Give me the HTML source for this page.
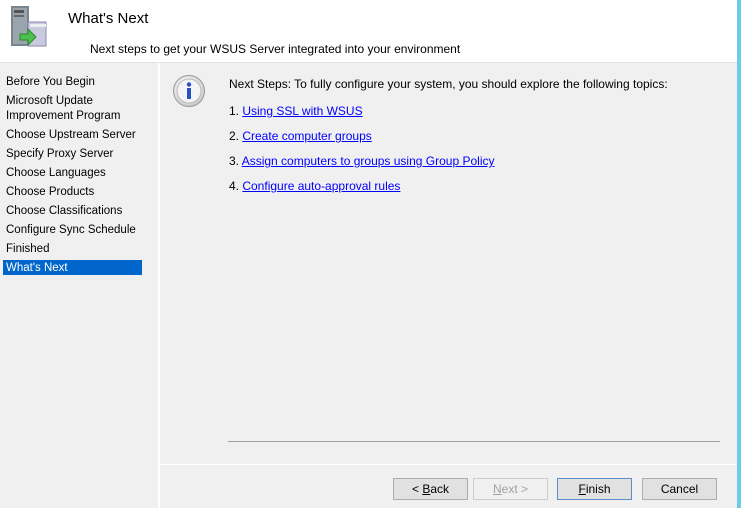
<!DOCTYPE html>
<html><head><style>
body{margin:0;width:741px;height:508px;overflow:hidden;background:#f0f0f0;font-family:"Liberation Sans",sans-serif;font-size:12px;color:#000;position:relative}
.a{position:absolute;white-space:nowrap}
.hdr{left:0;top:0;width:737px;height:62px;background:#fff;border-bottom:1px solid #e3e3e3}
.blue{left:737px;top:0;width:4px;height:508px;background:#6ccbe8}
.lp{left:0;top:63px;width:158px;height:445px;background:#f0f0f0;border-right:2px solid #fff}
.item{left:6px;font-size:11.5px}
.sel{left:3px;top:260px;width:139px;height:15px;background:#0066cc;color:#fff;font-size:11.5px}
a{color:#0000ff;text-decoration:underline}
.btn{top:478px;height:20px;width:73px;border:1px solid #adadad;background:#e1e1e1;text-align:center;line-height:20px}
</style></head><body>
<div class="a hdr"></div>
<div class="a blue"></div>
<svg class="a" style="left:8px;top:4px" width="42" height="44" viewBox="0 0 42 44">
<rect x="3" y="2" width="18" height="40" fill="#7a8590"/><rect x="5" y="4" width="14" height="36" fill="#9aa4ad"/>
<rect x="6" y="6" width="10" height="3" fill="#555"/><rect x="6" y="11" width="10" height="2" fill="#666"/>
<rect x="20" y="18" width="18" height="24" fill="#c9c9e0" stroke="#8a8ab0"/>
<rect x="22" y="20" width="16" height="3" fill="#eee"/>
<path d="M12 30h8v-5l8 8-8 8v-5h-8z" fill="#4cc04c" stroke="#2a8a2a"/>
</svg>
<div class="a" style="left:68px;top:10px;font-size:15px">What's Next</div>
<div class="a" style="left:90px;top:42px">Next steps to get your WSUS Server integrated into your environment</div>
<div class="a lp"></div>
<div class="a item" style="top:76px">Before You Begin</div>
<div class="a item" style="top:95px">Microsoft Update</div>
<div class="a item" style="top:110px">Improvement Program</div>
<div class="a item" style="top:129px">Choose Upstream Server</div>
<div class="a item" style="top:148px">Specify Proxy Server</div>
<div class="a item" style="top:167px">Choose Languages</div>
<div class="a item" style="top:186px">Choose Products</div>
<div class="a item" style="top:205px">Choose Classifications</div>
<div class="a item" style="top:224px">Configure Sync Schedule</div>
<div class="a item" style="top:243px">Finished</div>
<div class="a sel"><span style="position:absolute;left:3px;top:2px">What's Next</span></div>
<svg class="a" style="left:172px;top:74px" width="34" height="34" viewBox="0 0 34 34">
<defs><radialGradient id="g" cx="40%" cy="35%" r="70%"><stop offset="0" stop-color="#fff"/><stop offset="1" stop-color="#c8c8c8"/></radialGradient></defs>
<circle cx="17" cy="17" r="15.5" fill="url(#g)" stroke="#999"/>
<circle cx="17" cy="17" r="12" fill="#f4f4f4" stroke="#bbb"/>
<circle cx="17" cy="10.5" r="2.2" fill="#2a4fc0"/>
<rect x="15" y="14" width="4" height="11" fill="#2a4fc0"/>
</svg>
<div class="a" style="left:229px;top:77px">Next Steps: To fully configure your system, you should explore the following topics:</div>
<div class="a" style="left:229px;top:104px">1. <a>Using SSL with WSUS</a></div>
<div class="a" style="left:229px;top:129px">2. <a>Create computer groups</a></div>
<div class="a" style="left:229px;top:154px">3. <a>Assign computers to groups using Group Policy</a></div>
<div class="a" style="left:229px;top:179px">4. <a>Configure auto-approval rules</a></div>
<div class="a" style="left:228px;top:441px;width:492px;height:1px;background:#a0a0a0"></div>
<div class="a" style="left:160px;top:464px;width:577px;height:1px;background:#fff"></div>
<div class="a btn" style="left:393px">&lt; <u>B</u>ack</div>
<div class="a btn" style="left:473px;background:#f0f0f0;border-color:#ccc;color:#a0a0a0"><u>N</u>ext &gt;</div>
<div class="a btn" style="left:557px;border-color:#5a8fc8"><u>F</u>inish</div>
<div class="a btn" style="left:642px">Cancel</div>
</body></html>
